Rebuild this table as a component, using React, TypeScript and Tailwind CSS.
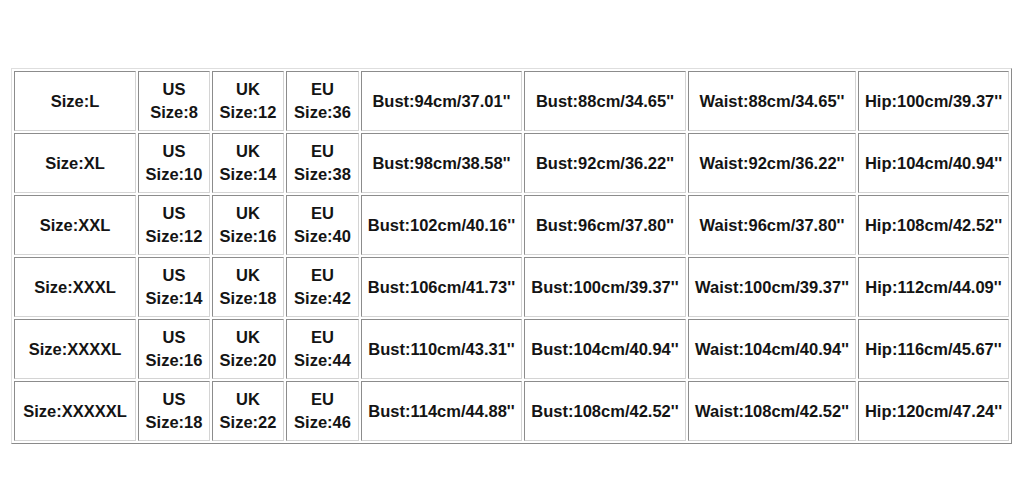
const rows = [
  { size: 'Size:L', us: '8', uk: '12', eu: '36', bust: 'Bust:94cm/37.01\'\'', bust2: 'Bust:88cm/34.65\'\'', waist: 'Waist:88cm/34.65\'\'', hip: 'Hip:100cm/39.37\'\'' },
  { size: 'Size:XL', us: '10', uk: '14', eu: '38', bust: 'Bust:98cm/38.58\'\'', bust2: 'Bust:92cm/36.22\'\'', waist: 'Waist:92cm/36.22\'\'', hip: 'Hip:104cm/40.94\'\'' },
  { size: 'Size:XXL', us: '12', uk: '16', eu: '40', bust: 'Bust:102cm/40.16\'\'', bust2: 'Bust:96cm/37.80\'\'', waist: 'Waist:96cm/37.80\'\'', hip: 'Hip:108cm/42.52\'\'' },
  { size: 'Size:XXXL', us: '14', uk: '18', eu: '42', bust: 'Bust:106cm/41.73\'\'', bust2: 'Bust:100cm/39.37\'\'', waist: 'Waist:100cm/39.37\'\'', hip: 'Hip:112cm/44.09\'\'' },
  { size: 'Size:XXXXL', us: '16', uk: '20', eu: '44', bust: 'Bust:110cm/43.31\'\'', bust2: 'Bust:104cm/40.94\'\'', waist: 'Waist:104cm/40.94\'\'', hip: 'Hip:116cm/45.67\'\'' },
  { size: 'Size:XXXXXL', us: '18', uk: '22', eu: '46', bust: 'Bust:114cm/44.88\'\'', bust2: 'Bust:108cm/42.52\'\'', waist: 'Waist:108cm/42.52\'\'', hip: 'Hip:120cm/47.24\'\'' },
];

// inset cell border like an old border=1 table
const cell =
  'h-[60px] p-0 text-center align-middle whitespace-nowrap border border-t-[#8c8c8c] border-l-[#8c8c8c] border-b-[#d4d4d4] border-r-[#d4d4d4]';

export default function App() {
  return (
    <div className="w-[1024px] h-[500px] bg-white pt-[68px] pl-[11px] font-['Liberation_Sans',Arial,sans-serif] text-[16.5px] font-bold leading-[23px] text-[#141414]">
      <table className="border-separate border-spacing-[2px] border border-t-[#dedede] border-l-[#dedede] border-b-[#8a8a8a] border-r-[#8a8a8a]">
        <tbody>
          {rows.map((r) => (
            <tr key={r.size}>
              <td className={`${cell} w-[122px]`}>{r.size}</td>
              <td className={`${cell} w-[72px]`}>
                US<br />Size:{r.us}
              </td>
              <td className={`${cell} w-[72px]`}>
                UK<br />Size:{r.uk}
              </td>
              <td className={`${cell} w-[73px]`}>
                EU<br />Size:{r.eu}
              </td>
              <td className={`${cell} w-[161px]`}>{r.bust}</td>
              <td className={`${cell} w-[162px]`}>{r.bust2}</td>
              <td className={`${cell} w-[168px]`}>{r.waist}</td>
              <td className={`${cell} w-[151px]`}>{r.hip}</td>
            </tr>
          ))}
        </tbody>
      </table>
    </div>
  );
}
